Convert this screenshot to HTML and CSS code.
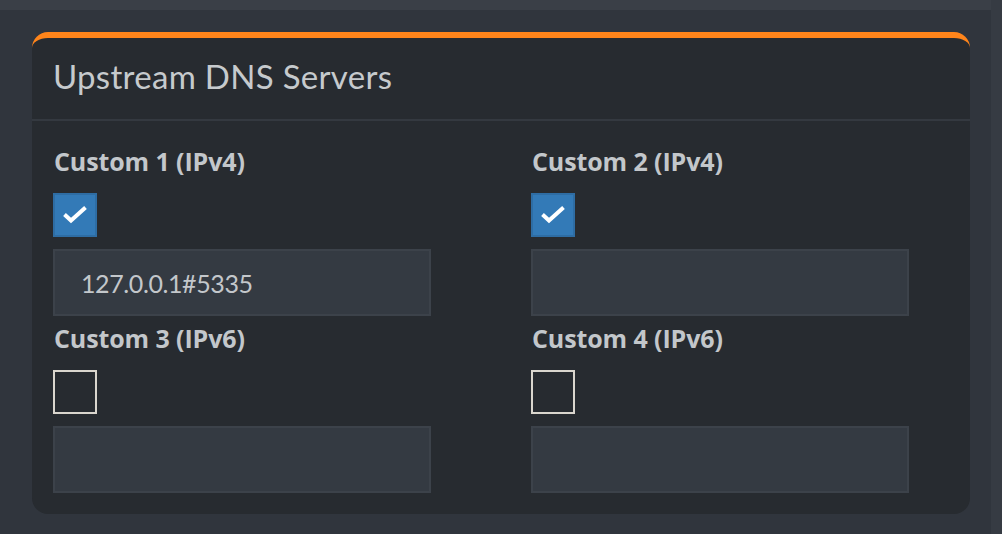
FILE: index.html
```html
<!DOCTYPE html>
<html>
<head>
<meta charset="utf-8">
<link rel="stylesheet" href="styles.css">
</head>
<body>
<div class="page">
  <div class="main">
    <div class="topbar"></div>
    <div class="content">
      <div class="card">
        <div class="card-header">
          <h3 class="card-title">Upstream DNS Servers</h3>
        </div>
        <div class="card-body">
          <div class="field">
            <label class="label">Custom 1 (IPv4)</label>
            <span class="check checked"><svg viewBox="0 0 24 18" class="tick"><path d="M1.5 8.5 L8 14.5 L22.5 1.5" /></svg></span>
            <div class="input">127.0.0.1#5335</div>
          </div>
          <div class="field">
            <label class="label">Custom 2 (IPv4)</label>
            <span class="check checked"><svg viewBox="0 0 24 18" class="tick"><path d="M1.5 8.5 L8 14.5 L22.5 1.5" /></svg></span>
            <div class="input"></div>
          </div>
          <div class="field">
            <label class="label">Custom 3 (IPv6)</label>
            <span class="check"></span>
            <div class="input"></div>
          </div>
          <div class="field">
            <label class="label">Custom 4 (IPv6)</label>
            <span class="check"></span>
            <div class="input"></div>
          </div>
        </div>
      </div>
    </div>
  </div>
  <div class="scrollstrip"></div>
</div>
</body>
</html>
```

FILE: styles.css
```css
html, body {
  margin: 0;
  padding: 0;
  height: 100%;
  background: #30353d;
  font-family: "Lato", "Open Sans", sans-serif;
  color: #c3c7cb;
  overflow: hidden;
}
.page {
  display: flex;
  height: 534px;
}
.main {
  flex: 1;
  display: flex;
  flex-direction: column;
}
.topbar {
  height: 10px;
  background: #3a3f47;
}
.content {
  padding: 22px 21px 0 32px;
}
.scrollstrip {
  width: 11px;
  background: #363b43;
}
.card {
  width: 938px;
  box-sizing: border-box;
  background: #272b30;
  border-top: 6px solid #ff851b;
  border-radius: 16px;
}
.card-header {
  height: 83px;
  box-sizing: border-box;
  border-bottom: 2px solid #343940;
  padding: 18px 0 0 21px;
}
.card-title {
  margin: 0;
  font-family: "Lato", sans-serif;
  font-weight: 400;
  font-size: 33px;
  line-height: 40px;
  letter-spacing: 0.3px;
  color: #c6cacd;
}
.card-body {
  display: grid;
  grid-template-columns: 378px 378px;
  column-gap: 100px;
  padding: 26px 0 21px 21px;
}
.field {
  display: flex;
  flex-direction: column;
  align-items: flex-start;
}
.label {
  font-family: "Open Sans", sans-serif;
  font-weight: 700;
  font-size: 25px;
  line-height: 28px;
  height: 28px;
  padding-left: 1px;
  color: #c3c7cb;
  letter-spacing: -0.1px;
}
.check {
  margin-top: 18px;
  width: 44px;
  height: 44px;
  box-sizing: border-box;
  border: 2px solid #dad6ce;
  display: flex;
  align-items: center;
  justify-content: center;
}
.check.checked {
  background: #337ab7;
  border-color: #2e6da4;
}
.tick {
  width: 24px;
  height: 18px;
}
.tick path {
  fill: none;
  stroke: #ffffff;
  stroke-width: 4;
  stroke-linecap: butt;
  stroke-linejoin: miter;
}
.input {
  margin-top: 12px;
  width: 378px;
  height: 67px;
  box-sizing: border-box;
  background: #343a42;
  border: 2px solid #3c424a;
  padding-left: 26px;
  display: flex;
  align-items: center;
  font-size: 25px;
  letter-spacing: -0.4px;
  color: #c3c7cb;
}
.field:nth-child(n+3) .label {
  margin-top: 8px;
}
```
